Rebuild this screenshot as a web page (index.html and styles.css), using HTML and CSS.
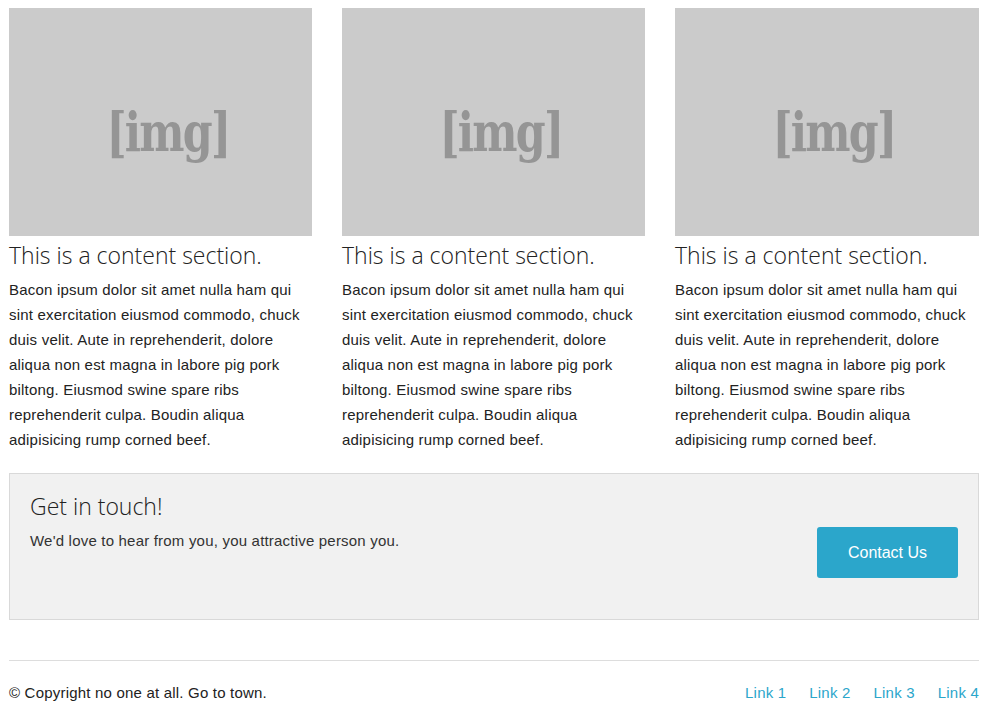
FILE: index.html
```html
<!DOCTYPE html>
<html>
<head>
<meta charset="utf-8">
<link rel="stylesheet" href="styles.css">
</head>
<body>
<div class="page">
  <div class="cols">
    <div class="col">
      <div class="ph"><span>[img]</span></div>
      <h3>This is a content section.</h3>
      <p>Bacon ipsum dolor sit amet nulla ham qui sint exercitation eiusmod commodo, chuck duis velit. Aute in reprehenderit, dolore aliqua non est magna in labore pig pork biltong. Eiusmod swine spare ribs reprehenderit culpa. Boudin aliqua adipisicing rump corned beef.</p>
    </div>
    <div class="col">
      <div class="ph"><span>[img]</span></div>
      <h3>This is a content section.</h3>
      <p>Bacon ipsum dolor sit amet nulla ham qui sint exercitation eiusmod commodo, chuck duis velit. Aute in reprehenderit, dolore aliqua non est magna in labore pig pork biltong. Eiusmod swine spare ribs reprehenderit culpa. Boudin aliqua adipisicing rump corned beef.</p>
    </div>
    <div class="col">
      <div class="ph"><span>[img]</span></div>
      <h3>This is a content section.</h3>
      <p>Bacon ipsum dolor sit amet nulla ham qui sint exercitation eiusmod commodo, chuck duis velit. Aute in reprehenderit, dolore aliqua non est magna in labore pig pork biltong. Eiusmod swine spare ribs reprehenderit culpa. Boudin aliqua adipisicing rump corned beef.</p>
    </div>
  </div>
  <div class="panel">
    <div class="panel-text">
      <h4>Get in touch!</h4>
      <p>We'd love to hear from you, you attractive person you.</p>
    </div>
    <a class="btn" href="#">Contact Us</a>
  </div>
  <footer class="footer">
    <p>© Copyright no one at all. Go to town.</p>
    <nav class="links">
      <a href="#">Link 1</a>
      <a href="#">Link 2</a>
      <a href="#">Link 3</a>
      <a href="#">Link 4</a>
    </nav>
  </footer>
</div>
</body>
</html>
```

FILE: styles.css
```css
html, body { margin: 0; padding: 0; background: #fff; }
body {
  font-family: "Liberation Sans", Arial, sans-serif;
  color: #222;
  font-size: 15px;
  letter-spacing: 0.2px;
}
.page {
  width: 970px;
  padding: 8px 0 0 9px;
}
.cols {
  display: grid;
  grid-template-columns: 303px 303px 304px;
  column-gap: 30px;
}
.ph {
  height: 228px;
  box-sizing: border-box;
  padding: 19px 0 0 14px;
  background: #cbcbcb;
  display: flex;
  align-items: center;
  justify-content: center;
}
.ph span {
  font-family: "DejaVu Serif", serif;
  font-stretch: condensed;
  font-weight: bold;
  font-size: 54px;
  color: #959595;
  letter-spacing: -2px;
  transform: scaleX(0.88);
}
.col h3 {
  font-family: "Open Sans", sans-serif;
  font-weight: 300;
  font-size: 23px;
  letter-spacing: 0;
  color: #222;
  margin: 4px 0 0;
  line-height: 30px;
}
.col p {
  margin: 7px 0 0;
  line-height: 25px;
}
.panel {
  margin-top: 21px;
  background: #f1f1f1;
  border: 1px solid #d9d9d9;
  height: 145px;
  display: flex;
  justify-content: space-between;
  align-items: flex-start;
  padding: 0 20px;
}
.panel h4 {
  font-family: "Open Sans", sans-serif;
  font-weight: 300;
  font-size: 23px;
  letter-spacing: 0;
  color: #222;
  margin: 17px 0 0;
  line-height: 30px;
}
.panel p {
  margin: 10px 0 0;
  line-height: 20px;
  color: #333;
}
.btn {
  margin-top: 53px;
  width: 141px;
  height: 51px;
  background: #2ba6cb;
  border-radius: 3px;
  color: #fff;
  font-size: 16px;
  letter-spacing: 0;
  text-decoration: none;
  display: flex;
  align-items: center;
  justify-content: center;
}
.footer {
  margin-top: 40px;
  border-top: 1px solid #ddd;
  display: flex;
  justify-content: space-between;
  align-items: center;
  height: 62px;
}
.footer p { margin: 0; }
.links { display: flex; gap: 23px; }
.links a {
  color: #2ba6cb;
  text-decoration: none;
}
```
